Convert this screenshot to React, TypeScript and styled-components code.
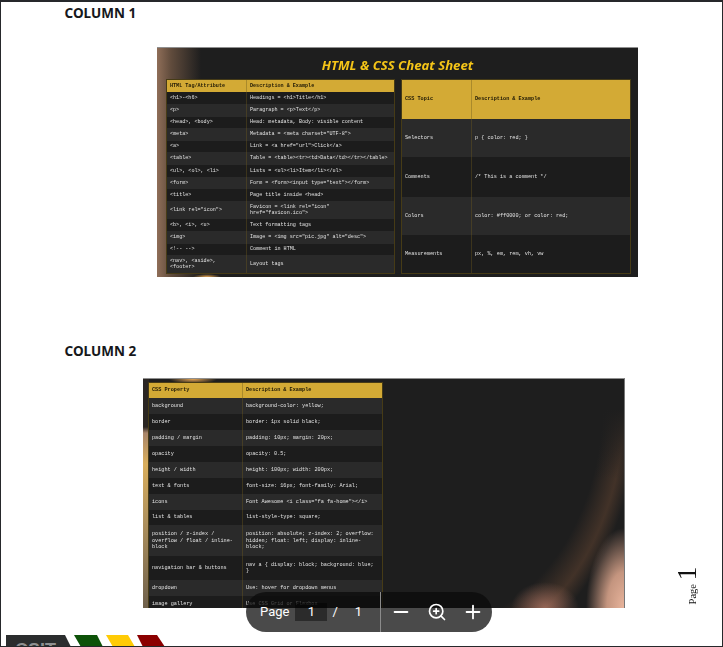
import React from "react";
import styled, { createGlobalStyle } from "styled-components";
import { Minus, Plus, ZoomIn } from "lucide-react";

const Global = createGlobalStyle`
  html, body { margin: 0; padding: 0; background: #fff; }
  body { font-family: "Noto Sans", "Liberation Sans", sans-serif; }
`;

const Page = styled.div`
  position: relative;
  width: 723px;
  height: 647px;
  box-sizing: border-box;
  border: 1px solid #26282b;
  border-top-width: 2px;
  background: #fff;
  overflow: hidden;
  display: flex;
  flex-direction: column;
`;

const Heading = styled.h2<{ $top: number }>`
  margin: ${(p) => p.$top}px 0 0 63.5px;
  font: 700 13.5px/20px "Noto Sans", sans-serif;
  color: #16181b;
`;

const SheetOne = styled.section`
  margin: 24px 0 0 156px;
  width: 481px;
  height: 230px;
  box-sizing: border-box;
  border-top: 1px solid #8f8f8f;
  flex: none;
  background:
    radial-gradient(ellipse 14px 3px at 50px 100%, #e6a552 0, rgba(230, 165, 82, 0) 100%),
    linear-gradient(90deg, rgba(143, 110, 88, 1) 0, rgba(100, 78, 62, 0.95) 14px, rgba(30, 30, 30, 0) 44px),
    #1e1e1e;
  display: flex;
  flex-direction: column;
  overflow: hidden;
`;

const Title = styled.h1`
  margin: 0;
  height: 32px;
  flex: none;
  text-align: center;
  font: italic 700 13.2px/34px "Open Sans", sans-serif;
  color: #f5c518;
  filter: blur(0.25px);
`;

const TablePair = styled.div`
  display: flex;
  gap: 8px;
  padding-left: 10px;
`;

const Table = styled.div<{ $width: number }>`
  width: ${(p) => p.$width}px;
  flex: none;
  box-sizing: border-box;
  outline: 1px solid #463b16;
  display: flex;
  flex-direction: column;
  font: 400 5.1px/6.2px "Liberation Mono", monospace;
  color: #e2e2e2;
  filter: blur(0.5px);
`;

const Row = styled.div<{ $height: number; $first: number; $alt?: boolean; $size?: number }>`
  height: ${(p) => p.$height}px;
  flex: none;
  display: grid;
  grid-template-columns: ${(p) => p.$first}px 1fr;
  align-items: center;
  background: ${(p) => (p.$alt ? "#2a2a2a" : "#1c1c1c")};
  font-size: ${(p) => p.$size ?? 5.1}px;
`;

const HeaderRow = styled(Row)`
  background: #d3aa35;
  color: #1f1906;
  font-weight: 700;
`;

const Cell = styled.div`
  padding: 0 3px;
  height: 100%;
  display: flex;
  align-items: center;
  white-space: pre-wrap;
  & + & { border-left: 1px solid rgba(110, 90, 30, 0.4); }
`;

const SheetRow = styled.div`
  display: flex;
  margin-top: 17px;
  flex: none;
`;

const SheetTwo = styled.section`
  margin-left: 142px;
  width: 482px;
  height: 230px;
  box-sizing: border-box;
  border-top: 1px solid #8f8f8f;
  border-right: 1px solid #777;
  flex: none;
  padding: 4px 0 0 6px;
  overflow: hidden;
  background:
    radial-gradient(ellipse 38px 80px at 100% 100%, #e8b49c 0, #c4957f 45%, rgba(60, 50, 46, 0) 100%),
    radial-gradient(ellipse 34px 26px at 402px 100%, rgba(170, 115, 98, 0.8) 0, rgba(170, 115, 98, 0) 100%),
    radial-gradient(ellipse 24px 5px at 50px 0, #e6a552 0, rgba(230, 165, 82, 0) 100%),
    linear-gradient(180deg, #2b2623 48px, #a8856a 54px, #d9ae5c 85px, #b0925e 140px, #6e604c 230px) 0 0 / 6px 100% no-repeat,
    linear-gradient(180deg, #1e1e1e 30px, rgba(30, 30, 30, 0) 100px),
    radial-gradient(ellipse 200px 278px at 300px 20px, rgba(30, 30, 30, 0) 0 80%, rgba(66, 50, 40, 1) 91%, rgba(30, 30, 30, 0) 98%),
    #1e1e1e;
`;

const PageMarker = styled.div`
  margin: 0 0 4px 50px;
  align-self: flex-end;
  writing-mode: vertical-rl;
  text-orientation: sideways;
  transform: rotate(180deg);
  font-family: "Liberation Serif", serif;
  color: #111;
  line-height: 24px;
  white-space: nowrap;
`;

const MarkerWord = styled.span`
  font-size: 10.5px;
`;

const MarkerNumber = styled.span`
  font-size: 28px;
  margin-left: 1px;
`;

const LogoStrip = styled.svg`
  margin: 27px 0 0 5px;
  flex: none;
  display: block;
`;

const Toolbar = styled.div`
  position: absolute;
  left: 245px;
  top: 590px;
  width: 246px;
  height: 40px;
  border-radius: 20px;
  background: rgba(11, 11, 11, 0.74);
  display: flex;
  align-items: center;
  color: #fff;
  font: 400 13px/20px Roboto, "Liberation Sans", sans-serif;
`;

const PageGroup = styled.div`
  width: 134px;
  padding-left: 14px;
  box-sizing: border-box;
  display: flex;
  align-items: center;
  height: 100%;
`;

const PageInput = styled.span`
  width: 32px;
  height: 18px;
  margin-left: 6px;
  background: rgba(0, 0, 0, 0.42);
  text-align: center;
  line-height: 18px;
`;

const Slash = styled.span`
  margin-left: 5px;
`;

const Total = styled.span`
  margin-left: 17px;
`;

const Divider = styled.span`
  width: 1px;
  height: 40px;
  background: #8b8b8b;
`;

const ZoomGroup = styled.div`
  display: flex;
  align-items: center;
  padding-left: 2px;
`;

const ZoomButton = styled.span`
  width: 36px;
  display: flex;
  justify-content: center;
  align-items: center;
`;

const h1 = [
  ["<h1>-<h6>", "Headings = <h1>Title</h1>", 12.3],
  ["<p>", "Paragraph = <p>Text</p>", 12.7],
  ["<head>, <body>", "Head: metadata, Body: visible content", 11.6],
  ["<meta>", "Metadata = <meta charset=\"UTF-8\">", 12.4],
  ["<a>", "Link = <a href=\"url\">Click</a>", 11.6],
  ["<table>", "Table = <table><tr><td>Data</td></tr></table>", 12.7],
  ["<ul>, <ol>, <li>", "Lists = <ul><li>Item</li></ul>", 11.7],
  ["<form>", "Form = <form><input type=\"text\"></form>", 12.3],
  ["<title>", "Page title inside <head>", 12],
  ["<link rel=\"icon\">", "Favicon = <link rel=\"icon\"\nhref=\"favicon.ico\">", 18],
  ["<b>, <i>, <u>", "Text formatting tags", 12],
  ["<img>", "Image = <img src=\"pic.jpg\" alt=\"desc\">", 13],
  ["<!-- -->", "Comment in HTML", 11],
  ["<nav>, <aside>,\n<footer>", "Layout tags", 18.3],
] as const;

const h2 = [
  ["Selectors", "p { color: red; }", 38.7],
  ["Comments", "/* This is a comment */", 40.3],
  ["Colors", "color: #ff0000; or color: red;", 38],
  ["Measurements", "px, %, em, rem, vh, vw", 38],
] as const;

const h3 = [
  ["background", "background-color: yellow;", 16],
  ["border", "border: 1px solid black;", 16],
  ["padding / margin", "padding: 10px; margin: 20px;", 16],
  ["opacity", "opacity: 0.5;", 16],
  ["height / width", "height: 100px; width: 200px;", 16],
  ["text & fonts", "font-size: 16px; font-family: Arial;", 16],
  ["icons", "Font Awesome <i class=\"fa fa-home\"></i>", 15.5],
  ["list & tables", "list-style-type: square;", 15.5],
  ["position / z-index /\noverflow / float / inline-\nblock", "position: absolute; z-index: 2; overflow:\nhidden; float: left; display: inline-\nblock;", 31.3],
  ["navigation bar & buttons", "nav a { display: block; background: blue;\n}", 23.4],
  ["dropdown", "Use: hover for dropdown menus", 16],
  ["image gallery", "Use CSS Grid or Flexbox", 16],
] as const;

export default function App() {
  return (
    <>
      <Global />
      <Page>
        <Heading $top={1}>COLUMN 1</Heading>
        <SheetOne>
          <Title>HTML &amp; CSS Cheat Sheet</Title>
          <TablePair>
            <Table $width={227}>
              <HeaderRow $height={11.7} $first={79}>
                <Cell>HTML Tag/Attribute</Cell>
                <Cell>Description &amp; Example</Cell>
              </HeaderRow>
              {h1.map((r, i) => (
                <Row key={i} $height={r[2]} $first={79} $alt={i % 2 === 1}>
                  <Cell>{r[0]}</Cell>
                  <Cell>{r[1]}</Cell>
                </Row>
              ))}
            </Table>
            <Table $width={228}>
              <HeaderRow $height={38.5} $first={69} $size={5.2}>
                <Cell>CSS Topic</Cell>
                <Cell>Description &amp; Example</Cell>
              </HeaderRow>
              {h2.map((r, i) => (
                <Row key={i} $height={r[2]} $first={69} $alt={i % 2 === 0} $size={5.2}>
                  <Cell>{r[0]}</Cell>
                  <Cell>{r[1]}</Cell>
                </Row>
              ))}
            </Table>
          </TablePair>
        </SheetOne>
        <Heading $top={64}>COLUMN 2</Heading>
        <SheetRow>
          <SheetTwo>
            <Table $width={233}>
              <HeaderRow $height={15} $first={93} $size={5.2}>
                <Cell>CSS Property</Cell>
                <Cell>Description &amp; Example</Cell>
              </HeaderRow>
              {h3.map((r, i) => (
                <Row key={i} $height={r[2]} $first={93} $alt={i % 2 === 0} $size={5.2}>
                  <Cell>{r[0]}</Cell>
                  <Cell>{r[1]}</Cell>
                </Row>
              ))}
            </Table>
          </SheetTwo>
          <PageMarker>
            <MarkerWord>Page</MarkerWord> <MarkerNumber>1</MarkerNumber>
          </PageMarker>
        </SheetRow>
        <LogoStrip width="170" height="12" viewBox="0 0 170 12">
          <polygon points="0,0 59,0 65,12 0,12" fill="#2b2d2e" />
          <text x="9" y="21" fontFamily="Liberation Sans" fontWeight="700" fontSize="18" fill="#8f9091">CSIT</text>
          <polygon points="68,0 91,0 97,12 75,12" fill="#0d5208" />
          <polygon points="100,0 122,0 129,12 107,12" fill="#ffcb05" />
          <polygon points="131,0 151,0 159,12 137,12" fill="#8b0000" />
        </LogoStrip>
        <Toolbar>
          <PageGroup>
            <span>Page</span>
            <PageInput>1</PageInput>
            <Slash>/</Slash>
            <Total>1</Total>
          </PageGroup>
          <Divider />
          <ZoomGroup>
            <ZoomButton><Minus size={22} strokeWidth={2} /></ZoomButton>
            <ZoomButton><ZoomIn size={20} strokeWidth={2} /></ZoomButton>
            <ZoomButton><Plus size={22} strokeWidth={2} /></ZoomButton>
          </ZoomGroup>
        </Toolbar>
      </Page>
    </>
  );
}
